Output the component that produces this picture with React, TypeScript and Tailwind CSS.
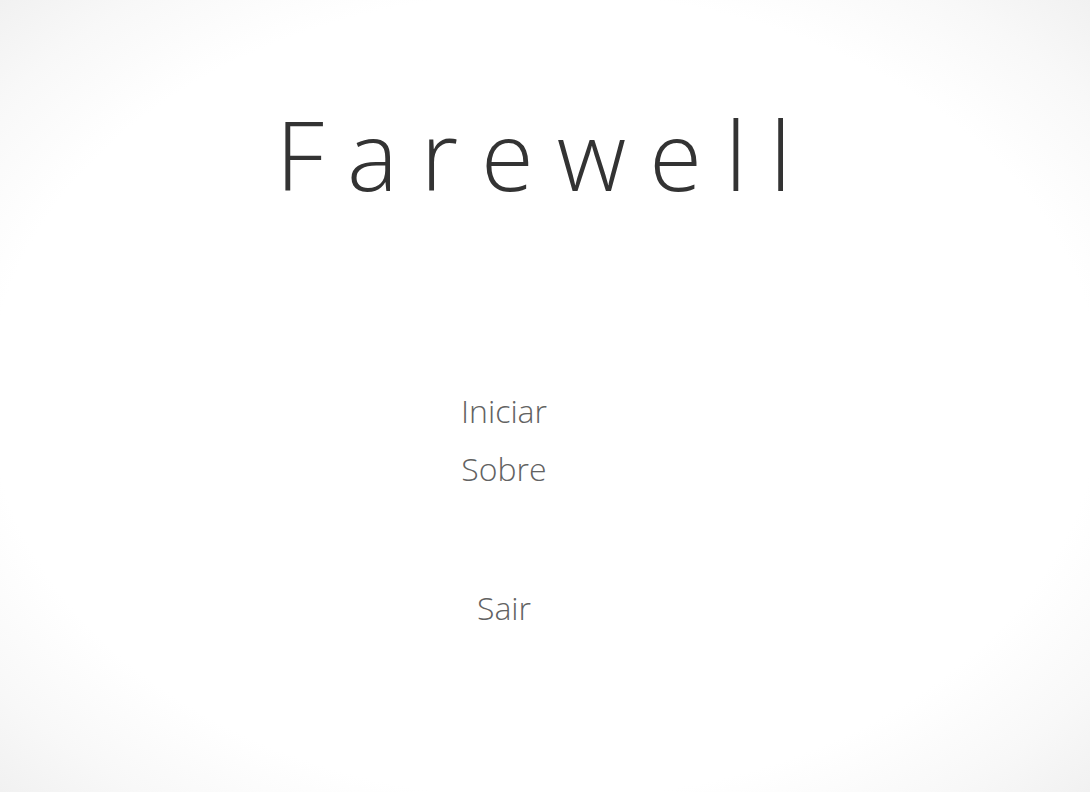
export default function App() {
  const items = ["Iniciar", "Sobre"]

  return (
    <div className="min-h-[792px] w-full bg-white bg-[radial-gradient(ellipse_at_center,#ffffff_72%,#f8f8f8_88%,#f1f1f1_100%)] font-['Open_Sans',sans-serif]">
      <div className="flex flex-col items-center pt-[106px]">
        <h1 className="text-[96px] font-light leading-none tracking-[23px] text-[#333333]">
          Farewell
        </h1>

        <nav className="mt-[180px] flex flex-col items-center pr-[82px] text-[32px] font-light leading-[58px] text-[#626262]">
          {items.map(item => (
            <button key={item} className="cursor-pointer">
              {item}
            </button>
          ))}
          <button className="mt-[81px] cursor-pointer">Sair</button>
        </nav>
      </div>
    </div>
  )
}
